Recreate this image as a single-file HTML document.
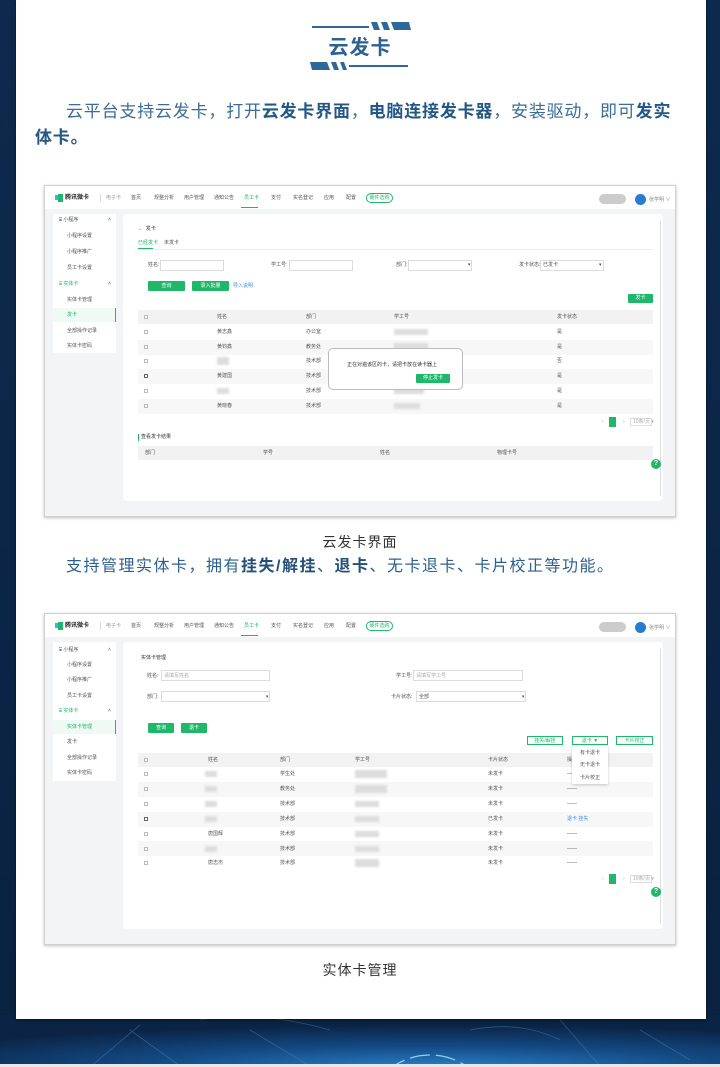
<!DOCTYPE html>
<html><head><meta charset="utf-8">
<style>
*{margin:0;padding:0;box-sizing:border-box}
html,body{width:720px;height:1067px;overflow:hidden}
body{position:relative;background:#0b2240;font-family:"Liberation Sans","Noto Sans CJK SC",sans-serif}
.a{position:absolute}
.panel{position:absolute;left:16px;top:0;width:690px;height:1019px;background:#fff;box-shadow:0 1px 3px rgba(0,0,0,.5)}
.p1{position:absolute;white-space:nowrap;font-size:17px;color:#3b6c98;letter-spacing:0.8px;line-height:20px}
.p1 b{color:#245786}
.cap{position:absolute;left:0;width:720px;text-align:center;font-size:14px;color:#333;letter-spacing:1px}
.shot{position:absolute;left:44px;width:632px;height:332px;background:#f3f4f6;border:1px solid #d0d0d0;box-shadow:0 1px 3px rgba(0,0,0,.25);overflow:hidden}
.shot .t{position:absolute;font-size:5px;color:#555;white-space:nowrap;line-height:6px;transform:translateY(-3px)}
.nav{position:absolute;left:0;top:0;width:632px;height:23px;background:#fff}
.side{position:absolute;left:8px;top:28px;width:63px;height:139px;background:#fff}
.card{position:absolute;left:78px;top:28px;width:540px;height:287px;background:#fff;border-radius:4px}
.inp{position:absolute;height:11px;border:1px solid #dcdcdc;background:#fff}
.btn{position:absolute;background:#1fb86a;color:#fff;font-size:5px;text-align:center;line-height:10px;border-radius:1px}
.obtn{position:absolute;border:1px solid #1fb86a;color:#1fb86a;font-size:5px;text-align:center;line-height:8px;background:#fff}
.th{position:absolute;left:93px;width:515px;height:14px;background:#f2f2f2}
.gr{position:absolute;left:93px;width:515px;height:15px;background:#f7f7f7}
.cb{position:absolute;width:4px;height:4px;border:1px solid #bbb;background:#fff}
.blur{position:absolute;height:6px;background:#ddd;filter:blur(1px)}
</style></head><body>

<svg class="a" style="left:0;top:0" width="720" height="1067">
<defs>
<radialGradient id="g1" cx="0.6" cy="1" r="0.8"><stop offset="0" stop-color="#2a7fc4"/><stop offset="0.5" stop-color="#134a84"/><stop offset="1" stop-color="#0b2446"/></radialGradient>
<linearGradient id="side" x1="0" x2="0" y1="0" y2="1"><stop offset="0" stop-color="#0d2a4e"/><stop offset="1" stop-color="#0a2140"/></linearGradient>
</defs>
<rect width="720" height="1067" fill="url(#side)"/>
<rect y="1015" width="720" height="52" fill="url(#g1)"/>
<g fill="none" stroke="#5fd0f0" stroke-width="1.3" opacity="0.85">
<circle cx="430" cy="1120" r="45"/><circle cx="430" cy="1120" r="55" stroke-dasharray="8 4"/>
<circle cx="430" cy="1120" r="65" stroke="#9fe6ff" stroke-dasharray="20 6"/>
</g>
<g stroke="#4a86b8" stroke-width="0.8" opacity="0.5" fill="none">
<path d="M90 1067 L140 1025 M130 1030 L180 1066 M250 1030 L310 1066 M200 1020 Q260 1010 330 1030 M560 1020 L600 1066 M640 1030 L690 1060 M470 1030 Q520 1020 560 1040"/>
</g>
<rect y="1064" width="720" height="3" fill="#e8e8e8"/>
</svg>

<div class="panel"></div>

<div class="a" style="left:312px;top:26px;width:57px;height:2px;background:#2e6899"></div>
<svg class="a" style="left:371px;top:22px" width="40" height="10"><g fill="#2e6899"><polygon points="0,0 6,0 9,8 3,8"/><polygon points="10,0 16,0 19,8 13,8"/><polygon points="20,0 38,0 40,8 23,8"/></g></svg>
<div class="a" style="left:0;width:720px;top:35px;text-align:center;font-size:20px;font-weight:bold;color:#2e6193;letter-spacing:1px;line-height:26px">云发卡</div>
<svg class="a" style="left:310px;top:62px" width="40" height="10"><g fill="#2e6899"><polygon points="0,0 17,0 20,8 2,8"/><polygon points="21,0 26,0 29,8 24,8"/><polygon points="30,0 34,0 37,8 33,8"/></g></svg>
<div class="a" style="left:349px;top:65px;width:59px;height:2px;background:#2e6899"></div>

<div class="p1" style="left:66px;top:102px">云平台支持云发卡，打开<b>云发卡界面</b>，<b>电脑连接发卡器</b>，安装驱动，即可<b>发实</b></div>
<div class="p1" style="left:35px;top:128px"><b>体卡。</b></div>

<!-- SHOT 1 -->
<div class="shot" style="top:185px">
 <div class="nav">
  <div class="a" style="left:10px;top:9px;width:4px;height:5px;background:#2db7f5"></div><div class="a" style="left:13px;top:8px;width:5px;height:8px;background:#1fb86a"></div>
  <div class="t" style="left:20px;top:12px;font-size:6px;font-weight:bold;color:#222">腾讯微卡</div>
  <div class="a" style="left:55px;top:8px;width:1px;height:8px;background:#ddd"></div>
  <div class="t" style="left:61px;top:12px;color:#999">电子卡</div>
  <div class="t" style="left:86px;top:12px">首页</div><div class="t" style="left:109px;top:12px">规整分析</div><div class="t" style="left:139px;top:12px">用户管理</div><div class="t" style="left:169px;top:12px">通知公告</div>
  <div class="t" style="left:199px;top:12px;color:#1fb86a">员工卡</div><div class="a" style="left:196px;top:21px;width:17px;height:1px;background:#1fb86a"></div>
  <div class="t" style="left:226px;top:12px">支付</div><div class="t" style="left:248px;top:12px">实名登记</div><div class="t" style="left:279px;top:12px">应用</div><div class="t" style="left:301px;top:12px">配置</div>
  <div class="a" style="left:321px;top:7px;width:27px;height:10px;border:1px solid #1fb86a;border-radius:5px;font-size:5px;color:#1fb86a;text-align:center;line-height:8px">硬件选购</div>
  <div class="a" style="left:554px;top:8px;width:27px;height:10px;background:#ccc;border-radius:5px"></div>
  <div class="a" style="left:590px;top:8px;width:11px;height:11px;background:#2a7ad0;border-radius:50%"></div>
  <div class="t" style="left:604px;top:14px;color:#888">张学明 ∨</div>
 </div>
 <div class="side">
  <div class="t" style="left:6px;top:6px">⌸ 小程序</div><div class="t" style="left:55px;top:6px">˄</div>
  <div class="t" style="left:14px;top:22px">小程序设置</div><div class="t" style="left:14px;top:38px">小程序推广</div><div class="t" style="left:14px;top:54px">员工卡设置</div>
  <div class="t" style="left:6px;top:70px;color:#1fb86a">⌸ 实体卡</div><div class="t" style="left:55px;top:70px">˄</div>
  <div class="t" style="left:14px;top:86px">实体卡管理</div>
  <div class="a" style="left:0;top:94px;width:63px;height:14px;background:#eefaf3"></div><div class="a" style="left:62px;top:94px;width:1px;height:14px;background:#1fb86a"></div>
  <div class="t" style="left:14px;top:101px;color:#1fb86a">发卡</div>
  <div class="t" style="left:14px;top:117px">全部操作记录</div><div class="t" style="left:14px;top:132px">实体卡密码</div>
 </div>
 <div class="card"></div>
 <div class="a" style="left:615px;top:35px;width:1px;height:275px;background:#ddd"></div>
 <div class="t" style="left:93px;top:43px;color:#333">←&nbsp; 发卡</div>
 <div class="t" style="left:93px;top:57px;color:#1fb86a">已经发卡</div><div class="t" style="left:119px;top:57px">未发卡</div>
 <div class="a" style="left:93px;top:63px;width:515px;height:1px;background:#eee"></div><div class="a" style="left:93px;top:62px;width:15px;height:1px;background:#1fb86a"></div>
 <div class="t" style="left:103px;top:79px">姓名:</div><div class="inp" style="left:115px;top:74px;width:64px"></div>
 <div class="t" style="left:226px;top:79px">学工号:</div><div class="inp" style="left:244px;top:74px;width:64px"></div>
 <div class="t" style="left:351px;top:79px">部门:</div><div class="inp" style="left:363px;top:74px;width:64px"></div><div class="t" style="left:423px;top:79px">▾</div>
 <div class="t" style="left:474px;top:79px">发卡状态:</div><div class="inp" style="left:495px;top:74px;width:64px"></div><div class="t" style="left:498px;top:79px">已发卡</div><div class="t" style="left:554px;top:79px">▾</div>
 <div class="btn" style="left:103px;top:95px;width:37px">查询</div>
 <div class="btn" style="left:147px;top:95px;width:37px">录入批量</div>
 <div class="t" style="left:188px;top:100px;color:#3a8ee6">导入说明</div>
 <div class="btn" style="left:583px;top:108px;width:25px;height:9px;line-height:9px">发卡</div>
 <div class="th" style="top:124px"></div>
 <div class="gr" style="top:154px"></div><div class="gr" style="top:183px"></div><div class="gr" style="top:213px"></div>
 <div class="cb" style="left:99px;top:129px"></div>
 <div class="t" style="left:172px;top:131px">姓名</div><div class="t" style="left:261px;top:131px">部门</div><div class="t" style="left:349px;top:131px">学工号</div><div class="t" style="left:512px;top:131px">发卡状态</div>
 <div class="cb" style="left:99px;top:144px"></div><div class="t" style="left:172px;top:146px">黄志鑫</div><div class="t" style="left:261px;top:146px">办公室</div><div class="blur" style="left:349px;top:143px;width:34px"></div><div class="t" style="left:512px;top:146px">是</div>
 <div class="cb" style="left:99px;top:159px"></div><div class="t" style="left:172px;top:161px">黄钧鑫</div><div class="t" style="left:261px;top:161px">教务处</div><div class="blur" style="left:349px;top:157px;width:34px"></div><div class="t" style="left:512px;top:161px">是</div>
 <div class="cb" style="left:99px;top:173px"></div><div class="blur" style="left:172px;top:171px;width:12px;height:8px"></div><div class="t" style="left:261px;top:175px">技术部</div><div class="t" style="left:512px;top:175px">否</div>
 <div class="cb" style="left:99px;top:188px;border-color:#666"></div><div class="t" style="left:172px;top:190px">黄建国</div><div class="t" style="left:261px;top:190px">技术部</div><div class="t" style="left:512px;top:190px">是</div>
 <div class="cb" style="left:99px;top:203px"></div><div class="blur" style="left:172px;top:202px;width:12px"></div><div class="t" style="left:261px;top:205px">技术部</div><div class="blur" style="left:349px;top:202px;width:30px"></div><div class="t" style="left:512px;top:205px">是</div>
 <div class="cb" style="left:99px;top:218px"></div><div class="t" style="left:172px;top:220px">黄晓春</div><div class="t" style="left:261px;top:220px">技术部</div><div class="blur" style="left:349px;top:217px;width:26px"></div><div class="t" style="left:512px;top:220px">是</div>
 <div class="a" style="left:283px;top:162px;width:135px;height:42px;background:#fff;border:1px solid #bbb;border-radius:5px"></div>
 <div class="t" style="left:302px;top:179px;color:#333">正在对遍该区的卡，请把卡放在读卡器上</div>
 <div class="btn" style="left:371px;top:188px;width:34px;height:9px;line-height:9px">停止发卡</div>
 <div class="t" style="left:557px;top:236px;color:#aaa">‹</div><div class="a" style="left:564px;top:231px;width:7px;height:10px;background:#1fb86a"></div><div class="t" style="left:578px;top:236px;color:#aaa">›</div>
 <div class="a" style="left:585px;top:232px;width:22px;height:8px;border:1px solid #ddd"></div><div class="t" style="left:588px;top:236px;color:#aaa">10条/页 ▾</div>
 <div class="a" style="left:93px;top:248px;width:1px;height:7px;background:#1fb86a"></div><div class="t" style="left:96px;top:251px;color:#333">查看发卡结果</div>
 <div class="th" style="top:260px"></div>
 <div class="t" style="left:100px;top:267px">部门</div><div class="t" style="left:218px;top:267px">学号</div><div class="t" style="left:335px;top:267px">姓名</div><div class="t" style="left:452px;top:267px">物理卡号</div>
 <div class="a" style="left:606px;top:273px;width:10px;height:10px;border-radius:50%;background:#1fb86a;color:#fff;font-size:7px;text-align:center;line-height:10px;font-weight:bold">?</div>
</div>

<div class="cap" style="top:532px">云发卡界面</div>
<div class="a" style="left:66px;top:557px;white-space:nowrap;font-size:16px;color:#2e5f8c;letter-spacing:1.5px;line-height:20px">支持管理实体卡，拥有<b style="color:#244f7a">挂失/解挂</b>、<b style="color:#244f7a">退卡</b>、无卡退卡、卡片校正等功能。</div>

<!-- SHOT 2 -->
<div class="shot" style="top:613px">
 <div class="nav">
  <div class="a" style="left:10px;top:9px;width:4px;height:5px;background:#2db7f5"></div><div class="a" style="left:13px;top:8px;width:5px;height:8px;background:#1fb86a"></div>
  <div class="t" style="left:20px;top:12px;font-size:6px;font-weight:bold;color:#222">腾讯微卡</div>
  <div class="a" style="left:55px;top:8px;width:1px;height:8px;background:#ddd"></div>
  <div class="t" style="left:61px;top:12px;color:#999">电子卡</div>
  <div class="t" style="left:86px;top:12px">首页</div><div class="t" style="left:109px;top:12px">规整分析</div><div class="t" style="left:139px;top:12px">用户管理</div><div class="t" style="left:169px;top:12px">通知公告</div>
  <div class="t" style="left:199px;top:12px;color:#1fb86a">员工卡</div><div class="a" style="left:196px;top:21px;width:17px;height:1px;background:#1fb86a"></div>
  <div class="t" style="left:226px;top:12px">支付</div><div class="t" style="left:248px;top:12px">实名登记</div><div class="t" style="left:279px;top:12px">应用</div><div class="t" style="left:301px;top:12px">配置</div>
  <div class="a" style="left:321px;top:7px;width:27px;height:10px;border:1px solid #1fb86a;border-radius:5px;font-size:5px;color:#1fb86a;text-align:center;line-height:8px">硬件选购</div>
  <div class="a" style="left:554px;top:8px;width:27px;height:10px;background:#ccc;border-radius:5px"></div>
  <div class="a" style="left:590px;top:8px;width:11px;height:11px;background:#2a7ad0;border-radius:50%"></div>
  <div class="t" style="left:604px;top:14px;color:#888">张学明 ∨</div>
 </div>
 <div class="side">
  <div class="t" style="left:6px;top:8px">⌸ 小程序</div><div class="t" style="left:55px;top:8px">˄</div>
  <div class="t" style="left:14px;top:23px">小程序设置</div><div class="t" style="left:14px;top:38px">小程序推广</div><div class="t" style="left:14px;top:54px">员工卡设置</div>
  <div class="t" style="left:6px;top:69px;color:#1fb86a">⌸ 实体卡</div><div class="t" style="left:55px;top:69px">˄</div>
  <div class="a" style="left:0;top:78px;width:63px;height:14px;background:#eefaf3"></div><div class="a" style="left:62px;top:78px;width:1px;height:14px;background:#1fb86a"></div>
  <div class="t" style="left:14px;top:85px;color:#1fb86a">实体卡管理</div>
  <div class="t" style="left:14px;top:100px">发卡</div>
  <div class="t" style="left:14px;top:116px">全部操作记录</div><div class="t" style="left:14px;top:131px">实体卡密码</div>
 </div>
 <div class="card"></div>
 <div class="a" style="left:615px;top:35px;width:1px;height:275px;background:#ddd"></div>
 <div class="t" style="left:96px;top:44px;color:#333">实体卡管理</div>
 <div class="t" style="left:102px;top:62px">姓名:</div><div class="inp" style="left:116px;top:56px;width:109px"></div><div class="t" style="left:119px;top:62px;color:#aaa">请填写姓名</div>
 <div class="t" style="left:351px;top:62px">学工号:</div><div class="inp" style="left:368px;top:56px;width:110px"></div><div class="t" style="left:371px;top:62px;color:#aaa">请填写学工号</div>
 <div class="t" style="left:102px;top:83px">部门:</div><div class="inp" style="left:116px;top:77px;width:109px"></div><div class="t" style="left:221px;top:83px">▾</div>
 <div class="t" style="left:346px;top:83px">卡片状态:</div><div class="inp" style="left:371px;top:77px;width:110px"></div><div class="t" style="left:374px;top:83px">全部</div><div class="t" style="left:477px;top:83px">▾</div>
 <div class="btn" style="left:103px;top:109px;width:26px">查询</div>
 <div class="btn" style="left:136px;top:109px;width:26px">退卡</div>
 <div class="obtn" style="left:482px;top:122px;width:36px;height:9px">挂失/解挂</div>
 <div class="obtn" style="left:527px;top:122px;width:36px;height:9px">退卡 ▼</div>
 <div class="obtn" style="left:571px;top:122px;width:37px;height:9px">卡片校正</div>
 <div class="th" style="top:139px"></div>
 <div class="gr" style="top:168px"></div><div class="gr" style="top:198px"></div><div class="gr" style="top:227px"></div>
 <div class="cb" style="left:99px;top:144px"></div>
 <div class="t" style="left:163px;top:146px">姓名</div><div class="t" style="left:235px;top:146px">部门</div><div class="t" style="left:310px;top:146px">学工号</div><div class="t" style="left:443px;top:146px">卡片状态</div><div class="t" style="left:522px;top:146px">操作</div>
 <div class="cb" style="left:99px;top:158px"></div><div class="blur" style="left:160px;top:157px;width:12px"></div><div class="t" style="left:235px;top:160px">学生处</div><div class="blur" style="left:310px;top:156px;width:32px;height:8px"></div><div class="t" style="left:443px;top:160px">未发卡</div><div class="t" style="left:522px;top:160px">——</div>
 <div class="cb" style="left:99px;top:173px"></div><div class="blur" style="left:160px;top:172px;width:12px"></div><div class="t" style="left:235px;top:175px">教务处</div><div class="blur" style="left:310px;top:171px;width:32px;height:8px"></div><div class="t" style="left:443px;top:175px">未发卡</div><div class="t" style="left:522px;top:175px">——</div>
 <div class="cb" style="left:99px;top:188px"></div><div class="blur" style="left:160px;top:187px;width:12px"></div><div class="t" style="left:235px;top:190px">技术部</div><div class="blur" style="left:310px;top:187px;width:24px"></div><div class="t" style="left:443px;top:190px">未发卡</div><div class="t" style="left:522px;top:190px">——</div>
 <div class="cb" style="left:99px;top:203px;border-color:#666"></div><div class="blur" style="left:160px;top:202px;width:12px"></div><div class="t" style="left:235px;top:205px">技术部</div><div class="blur" style="left:310px;top:202px;width:24px"></div><div class="t" style="left:443px;top:205px">已发卡</div><div class="t" style="left:522px;top:205px;color:#3a8ee6">退卡 挂失</div>
 <div class="cb" style="left:99px;top:218px"></div><div class="t" style="left:163px;top:220px">唐国辉</div><div class="t" style="left:235px;top:220px">技术部</div><div class="blur" style="left:310px;top:217px;width:24px"></div><div class="t" style="left:443px;top:220px">未发卡</div><div class="t" style="left:522px;top:220px">——</div>
 <div class="cb" style="left:99px;top:233px"></div><div class="blur" style="left:160px;top:232px;width:12px"></div><div class="t" style="left:235px;top:235px">技术部</div><div class="blur" style="left:310px;top:232px;width:24px"></div><div class="t" style="left:443px;top:235px">未发卡</div><div class="t" style="left:522px;top:235px">——</div>
 <div class="cb" style="left:99px;top:247px"></div><div class="t" style="left:163px;top:249px">唐志杰</div><div class="t" style="left:235px;top:249px">技术部</div><div class="blur" style="left:310px;top:245px;width:24px;height:8px"></div><div class="t" style="left:443px;top:249px">未发卡</div><div class="t" style="left:522px;top:249px">——</div>
 <div class="a" style="left:527px;top:132px;width:36px;height:38px;background:#fff;box-shadow:0 1px 3px rgba(0,0,0,.2)"></div>
 <div class="t" style="left:535px;top:139px">有卡退卡</div><div class="t" style="left:535px;top:151px">无卡退卡</div><div class="t" style="left:535px;top:164px">卡片校正</div>
 <div class="t" style="left:557px;top:265px;color:#aaa">‹</div><div class="a" style="left:564px;top:260px;width:7px;height:10px;background:#1fb86a"></div><div class="t" style="left:578px;top:265px;color:#aaa">›</div>
 <div class="a" style="left:585px;top:261px;width:22px;height:8px;border:1px solid #ddd"></div><div class="t" style="left:588px;top:265px;color:#aaa">10条/页 ▾</div>
 <div class="a" style="left:606px;top:273px;width:10px;height:10px;border-radius:50%;background:#1fb86a;color:#fff;font-size:7px;text-align:center;line-height:10px;font-weight:bold">?</div>
</div>

<div class="cap" style="top:960px">实体卡管理</div>
</body></html>
